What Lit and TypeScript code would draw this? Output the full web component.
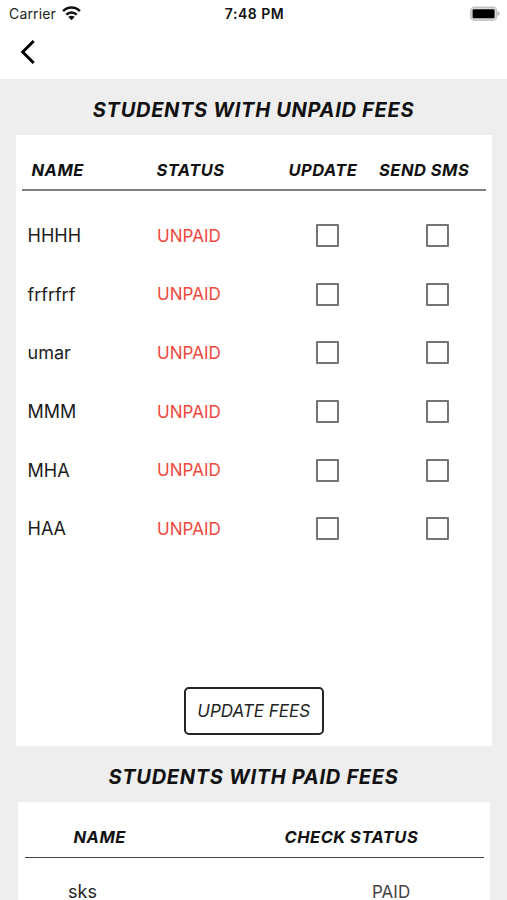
import { LitElement, html, css } from "lit";
import { customElement } from "lit/decorators.js";

@customElement("status-bar")
class StatusBar extends LitElement {
  static styles = css`
    :host { display: grid; grid-template-columns: 1fr auto 1fr; height: 27px; padding: 0 7px 0 9px; align-items: center; font-size: 14px; color: #222; }
    .carrier { display: flex; align-items: center; gap: 6px; letter-spacing: 0.15px; }
    .clock { font-weight: 600; color: #111; font-size: 14px; letter-spacing: 0.5px; }
    .battery { justify-self: end; display: block; }
    svg { display: block; }
  `;
  render() {
    return html`
      <div class="carrier">
        <span>Carrier</span>
        <svg width="19" height="15" viewBox="0 0 19 15" fill="none" stroke="#111" stroke-width="2.5">
          <path d="M1.1 5.1C5.8 .4 13.2 .4 17.9 5.1" />
          <path d="M4.3 8.7C7.2 5.8 11.8 5.8 14.7 8.7" />
          <path d="M6.3 11C8 9.4 11 9.4 12.7 11L9.5 14.2Z" fill="#111" stroke="none" />
        </svg>
      </div>
      <span class="clock">7:48 PM</span>
      <svg class="battery" width="31" height="15" viewBox="0 0 31 15">
        <rect x="1.7" y="1.2" width="26" height="13" rx="3.8" fill="#ddd" stroke="#c4c4c4" stroke-width="1.4" />
        <rect x="3.6" y="3.2" width="22" height="9" rx="1.2" fill="#000" />
        <path d="M28.7 5.3C31 6 31 9.2 28.7 9.9Z" fill="#aaa" />
      </svg>
    `;
  }
}

@customElement("unpaid-row")
class UnpaidRow extends LitElement {
  static properties = { name: { type: String } };
  declare name: string;
  static styles = css`
    :host { display: grid; grid-template-columns: 129.5px 158.5px 110px 1fr; align-items: center; height: 58.6px; padding-left: 12px; }
    .name { font-size: 18px; color: #1c1c1c; }
    .status { font-size: 17px; color: #f0483e; letter-spacing: 0.05px; }
    .box { box-sizing: border-box; width: 23px; height: 23px; border: 2px solid #757575; border-radius: 1px; }
  `;
  render() {
    return html`
      <span class="name">${this.name}</span>
      <span class="status">UNPAID</span>
      <span class="box"></span>
      <span class="box"></span>
    `;
  }
}

@customElement("app-root")
class AppRoot extends LitElement {
  static styles = css`
    :host { display: block; height: 900px; overflow: hidden; background: #eee; font-family: Inter, "Liberation Sans", sans-serif; color: #111; }
    .top { height: 79px; background: #fff; }
    .back { display: block; margin: 11px 0 0 20px; }
    .title { margin: 0; display: flex; align-items: center; justify-content: center; height: 56px; padding-top: 5px; box-sizing: border-box; font-size: 20px; line-height: 24px; font-style: italic; font-weight: 650; letter-spacing: 0.7px; }
    .paid-title { padding-top: 6px; }
    .card { box-sizing: border-box; background: #fff; }
    .unpaid { margin: 0 15px 0 15.5px; height: 610.5px; display: flex; flex-direction: column; }
    .paid { margin: 0 17.5px 0 18px; height: 120px; }
    .head { box-sizing: border-box; display: grid; align-items: center; height: 56px; margin: 0 6px 0 6.5px; padding-top: 15px; border-bottom: 2px solid #808080; font-size: 16.5px; line-height: 20px; font-style: italic; font-weight: 650; letter-spacing: 0.5px; white-space: nowrap; }
    .unpaid .head { grid-template-columns: 125px 132px 90.5px 1fr; padding-left: 9.5px; }
    .paid .head { grid-template-columns: 211px 1fr; padding-left: 49px; border-bottom: 1px solid #444; }
    .rows { padding-top: 15.5px; }
    .update { align-self: center; margin-top: auto; margin-bottom: 11px; box-sizing: border-box; width: 140px; height: 48px; padding: 0; border: 2.5px solid #242424; border-radius: 5px; background: #fff; font: italic 400 17px Inter, "Liberation Sans", sans-serif; color: #222; }
    .paid-row { display: grid; grid-template-columns: 304px 1fr; align-items: center; height: 68px; padding-left: 50px; }
    .student { font-size: 18px; line-height: 18px; color: #222; }
    .state { font-size: 17px; line-height: 18px; color: #444; }
  `;
  private students = ["HHHH", "frfrfrf", "umar", "MMM", "MHA", "HAA"];
  render() {
    return html`
      <header class="top">
        <status-bar></status-bar>
        <svg class="back" width="16" height="28" viewBox="0 0 16 28" fill="none" stroke="#000" stroke-width="3">
          <path d="M13.7 3L2.7 14L13.7 25" />
        </svg>
      </header>
      <h1 class="title">STUDENTS WITH UNPAID FEES</h1>
      <section class="card unpaid">
        <div class="head"><span>NAME</span><span>STATUS</span><span>UPDATE</span><span>SEND SMS</span></div>
        <div class="rows">${this.students.map((s) => html`<unpaid-row .name=${s}></unpaid-row>`)}</div>
        <button class="update">UPDATE FEES</button>
      </section>
      <h1 class="title paid-title">STUDENTS WITH PAID FEES</h1>
      <section class="card paid">
        <div class="head"><span>NAME</span><span>CHECK STATUS</span></div>
        <div class="paid-row"><span class="student">sks</span><span class="state">PAID</span></div>
      </section>
    `;
  }
}
